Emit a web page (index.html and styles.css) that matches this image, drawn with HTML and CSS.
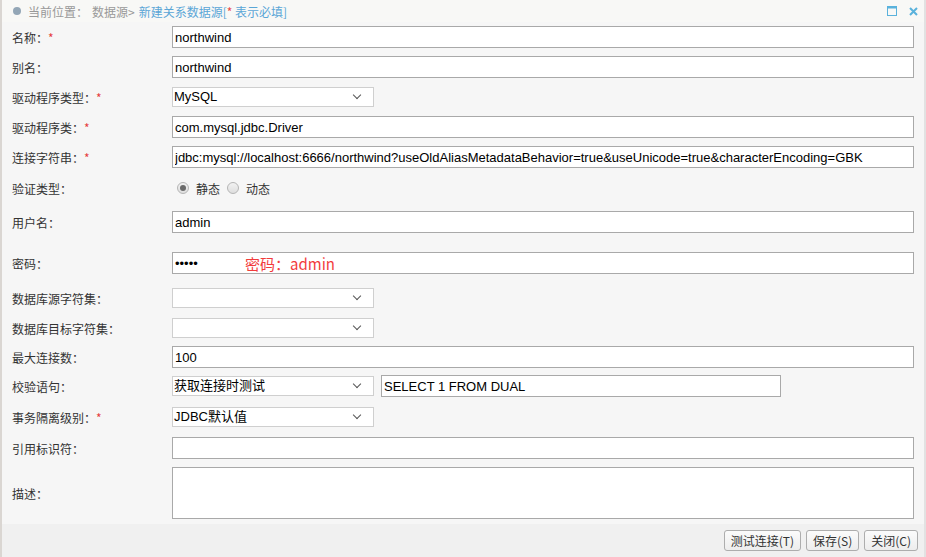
FILE: index.html
```
<!DOCTYPE html>
<html lang="zh-CN">
<head>
    <meta charset="UTF-8">
    <title>新建关系数据源</title>
    <link rel="stylesheet" href="styles.css">
</head>
<body>
    <div class="panel">
        <!-- 标题栏 -->
        <div class="titlebar">
            <span class="dot"></span>
            <span class="crumb">当前位置：</span>
            <span class="crumb">数据源&gt;</span>
            <span class="crumb-cur">新建关系数据源[<span class="req">*</span> 表示必填]</span>
            <span class="tools">
                <svg width="10" height="10" viewBox="0 0 10 10"><rect x="0.5" y="0.5" width="9" height="9" fill="none" stroke="#5ab2dc"/><rect x="0.5" y="0.5" width="9" height="2" fill="#5ab2dc"/></svg>
                <svg width="9" height="9" viewBox="0 0 9 9"><path d="M1 1L8 8M8 1L1 8" stroke="#5ab2dc" stroke-width="2"/></svg>
            </span>
        </div>

        <!-- 表单 -->
        <div class="form">
            <label>名称：<span class="req">*</span></label>
            <div><input class="text" value="northwind"></div>

            <label>别名：</label>
            <div><input class="text" value="northwind"></div>

            <label>驱动程序类型：<span class="req">*</span></label>
            <div><div class="select">MySQL</div></div>

            <label>驱动程序类：<span class="req">*</span></label>
            <div><input class="text" value="com.mysql.jdbc.Driver"></div>

            <label>连接字符串：<span class="req">*</span></label>
            <div><input class="text" value="jdbc:mysql://localhost:6666/northwind?useOldAliasMetadataBehavior=true&amp;useUnicode=true&amp;characterEncoding=GBK"></div>

            <label>验证类型：</label>
            <div class="radios">
                <span class="radio on"></span><span class="radio-label">静态</span>
                <span class="radio"></span><span class="radio-label">动态</span>
            </div>

            <label>用户名：</label>
            <div><input class="text" value="admin"></div>

            <label>密码：</label>
            <div class="pwd">
                <input class="text" value="•••••">
                <span class="note">密码：admin</span>
            </div>

            <label>数据库源字符集：</label>
            <div><div class="select"></div></div>

            <label>数据库目标字符集：</label>
            <div><div class="select"></div></div>

            <label>最大连接数：</label>
            <div><input class="text" value="100"></div>

            <label>校验语句：</label>
            <div class="pair">
                <div class="select">获取连接时测试</div>
                <input class="text short" value="SELECT 1 FROM DUAL">
            </div>

            <label>事务隔离级别：<span class="req">*</span></label>
            <div><div class="select">JDBC默认值</div></div>

            <label>引用标识符：</label>
            <div><input class="text" value=""></div>

            <label>描述：</label>
            <div><textarea class="area"></textarea></div>
        </div>

        <!-- 底部按钮 -->
        <div class="footer">
            <button class="btn">测试连接(T)</button>
            <button class="btn">保存(S)</button>
            <button class="btn">关闭(C)</button>
        </div>
    </div>
</body>
</html>
```

FILE: styles.css
```
body {
    margin: 0;
    font-family: "Noto Sans CJK SC", "Liberation Sans", sans-serif;
    font-size: 12px;
    color: #333;
    background: #f6f6f6;
}

.panel {
    height: 557px;
    border-left: 2px solid #dad6d2;
    border-right: 2px solid #e2e2e2;
    display: flex;
    flex-direction: column;
    background: #f6f6f6;
}

/* 标题栏 */
.titlebar {
    height: 22px;
    background: #f8f8f6;
    display: flex;
    align-items: center;
    padding-left: 11px;
    padding-right: 6px;
    color: #999;
}

.dot {
    width: 8px;
    height: 8px;
    border-radius: 50%;
    background: #93a6b6;
    margin-right: 7px;
}

.crumb {
    margin-right: 4px;
}

.crumb-cur {
    color: #5aa6d6;
}

.crumb-cur .req {
    color: #e84a4a;
}

.tools {
    margin-left: auto;
    display: flex;
    align-items: center;
    gap: 12px;
}

/* 表单 */
.form {
    display: grid;
    grid-template-columns: 170px 1fr;
    grid-template-rows: 30px 30px 30px 30px 30px 32px 36px 46px 24px 36px 22px 36px 26px 36px 54px;
    align-items: center;
    padding-right: 10px;
}

.form label {
    padding-left: 10px;
}

.req {
    color: #e53e3e;
}

.text {
    box-sizing: border-box;
    width: 100%;
    height: 22px;
    border: 1px solid #a9a9a9;
    background: #fff;
    padding: 0 2px;
    font-family: "Liberation Sans", Arial, sans-serif;
    font-size: 13px;
    color: #000;
    display: block;
    outline: none;
}

.text.short {
    width: 400px;
}

.select {
    box-sizing: border-box;
    width: 202px;
    height: 20px;
    border: 1px solid #cfcfcf;
    background: #fff;
    padding-left: 1px;
    line-height: 18px;
    font-family: "Liberation Sans", "Noto Sans CJK SC", sans-serif;
    font-size: 13px;
    color: #000;
    position: relative;
}

.select::after {
    content: "";
    position: absolute;
    right: 13px;
    top: 4px;
    width: 5px;
    height: 5px;
    border-right: 1px solid #555;
    border-bottom: 1px solid #555;
    transform: rotate(45deg);
}

.pair {
    display: flex;
    align-items: center;
    gap: 7px;
}

.radios {
    display: flex;
    align-items: center;
    padding-left: 5px;
}

.radio {
    box-sizing: border-box;
    width: 12px;
    height: 12px;
    border-radius: 50%;
    border: 1px solid #b5b5b5;
    background: linear-gradient(#f2f2f2, #dedede);
    position: relative;
}

.radio.on::after {
    content: "";
    position: absolute;
    left: 2px;
    top: 2px;
    width: 6px;
    height: 6px;
    border-radius: 50%;
    background: #6a6a6a;
}

.radio-label {
    margin-left: 7px;
    margin-right: 7px;
}

.pwd {
    position: relative;
}

.pwd .note {
    position: absolute;
    left: 73px;
    top: 1px;
    color: #f23c3c;
    font-size: 15px;
}

.area {
    box-sizing: border-box;
    display: block;
    width: 100%;
    height: 52px;
    border: 1px solid #a9a9a9;
    background: #fff;
    resize: none;
    margin-top: -1px;
}

/* 底部 */
.footer {
    margin-top: auto;
    height: 33px;
    background: #f0f0f0;
    display: flex;
    align-items: center;
    justify-content: flex-end;
    gap: 5px;
    padding-right: 6px;
}

.btn {
    height: 21px;
    padding: 0 6px;
    border: 1px solid #adadad;
    border-radius: 3px;
    background: linear-gradient(#fbfbfb, #ededed);
    font-family: "Noto Sans CJK SC", sans-serif;
    font-size: 12px;
    color: #333;
    line-height: 19px;
}
```
